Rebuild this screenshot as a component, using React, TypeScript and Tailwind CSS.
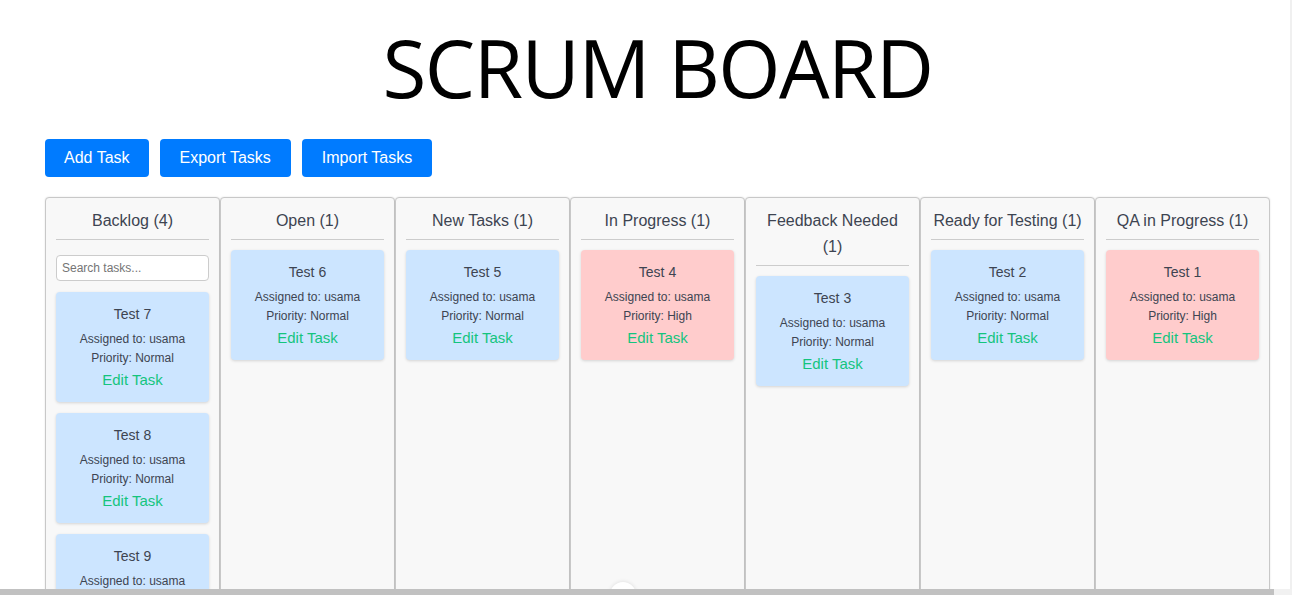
import React from "react";

type Task = { title: string; priority: "Normal" | "High" };
type Column = { name: string; tasks: Task[]; search?: boolean };

const columns: Column[] = [
  {
    name: "Backlog (4)",
    search: true,
    tasks: [
      { title: "Test 7", priority: "Normal" },
      { title: "Test 8", priority: "Normal" },
      { title: "Test 9", priority: "Normal" },
      { title: "Test 10", priority: "Normal" },
    ],
  },
  { name: "Open (1)", tasks: [{ title: "Test 6", priority: "Normal" }] },
  { name: "New Tasks (1)", tasks: [{ title: "Test 5", priority: "Normal" }] },
  { name: "In Progress (1)", tasks: [{ title: "Test 4", priority: "High" }] },
  { name: "Feedback Needed (1)", tasks: [{ title: "Test 3", priority: "Normal" }] },
  { name: "Ready for Testing (1)", tasks: [{ title: "Test 2", priority: "Normal" }] },
  { name: "QA in Progress (1)", tasks: [{ title: "Test 1", priority: "High" }] },
];

function Card({ task }: { task: Task }) {
  const high = task.priority === "High";
  return (
    <div
      className={
        (high ? "bg-[#ffcccc]" : "bg-[#cce5ff]") +
        " rounded-[4px] shadow-[0_1px_3px_rgba(0,0,0,0.15)] pt-[12px] pb-[11px] flex flex-col items-center text-[#3d4451]"
      }
    >
      <div className="text-[14px] leading-[20px]">{task.title}</div>
      <div className="mt-[6px] text-[12px] leading-[19px]">Assigned to: usama</div>
      <div className="text-[12px] leading-[19px]">Priority: {task.priority}</div>
      <div className="mt-[1px] text-[15px] leading-[22px] text-[#14c47e] cursor-pointer">Edit Task</div>
    </div>
  );
}

export default function App() {
  return (
    <div className="relative w-full h-screen overflow-hidden bg-white font-['Liberation_Sans',Arial,sans-serif]">
      <div className="w-[1315px] px-[45px]">
        <h1 className="mt-[27px] text-center text-[80px] leading-[80px] font-['Open_Sans',sans-serif] text-black font-normal tracking-[-1.5px]">
          SCRUM BOARD
        </h1>
        <div className="mt-[32px] flex gap-[11px]">
          <button className="h-[38px] px-[19px] rounded-[4px] bg-[#007bff] text-white text-[16px]">Add Task</button>
          <button className="h-[38px] px-[20px] rounded-[4px] bg-[#007bff] text-white text-[16px]">Export Tasks</button>
          <button className="h-[38px] px-[20px] rounded-[4px] bg-[#007bff] text-white text-[16px]">Import Tasks</button>
        </div>
        <div className="mt-[20px] flex">
          {columns.map((col) => (
            <div
              key={col.name}
              className="w-[175px] shrink-0 bg-[#f8f8f8] border border-[#c8c8c8] rounded-[4px] px-[10px] pt-[10px] pb-[10px] shadow-[0_0_2px_rgba(0,0,0,0.12)]"
            >
              <div className="pb-[5px] border-b border-[#cccccc] text-center text-[16px] leading-[26px] text-[#3d4451]">
                {col.name}
              </div>
              <div className="pt-[10px] flex flex-col gap-[11px]">
                {col.search && (
                  <input
                    className="mt-[5px] h-[26px] w-full rounded-[4px] border border-[#cccccc] bg-white px-[5px] text-[12px] text-[#333] placeholder:text-[#757575] outline-none"
                    placeholder="Search tasks..."
                  />
                )}
                {col.tasks.map((t) => (
                  <Card key={t.title} task={t} />
                ))}
              </div>
            </div>
          ))}
        </div>
      </div>
      <div className="absolute top-0 right-0 w-[2px] h-full bg-[#f0f0f0]" />
      <div className="absolute left-[610px] top-[582px] w-[26px] h-[26px] rounded-full bg-white shadow-[0_0_4px_rgba(0,0,0,0.12)]" />
      <div className="absolute left-0 bottom-0 w-full h-[6px] bg-[#f1f1f1] flex">
        <div className="w-[1274px] h-full bg-[#c1c1c1]" />
      </div>
    </div>
  );
}
